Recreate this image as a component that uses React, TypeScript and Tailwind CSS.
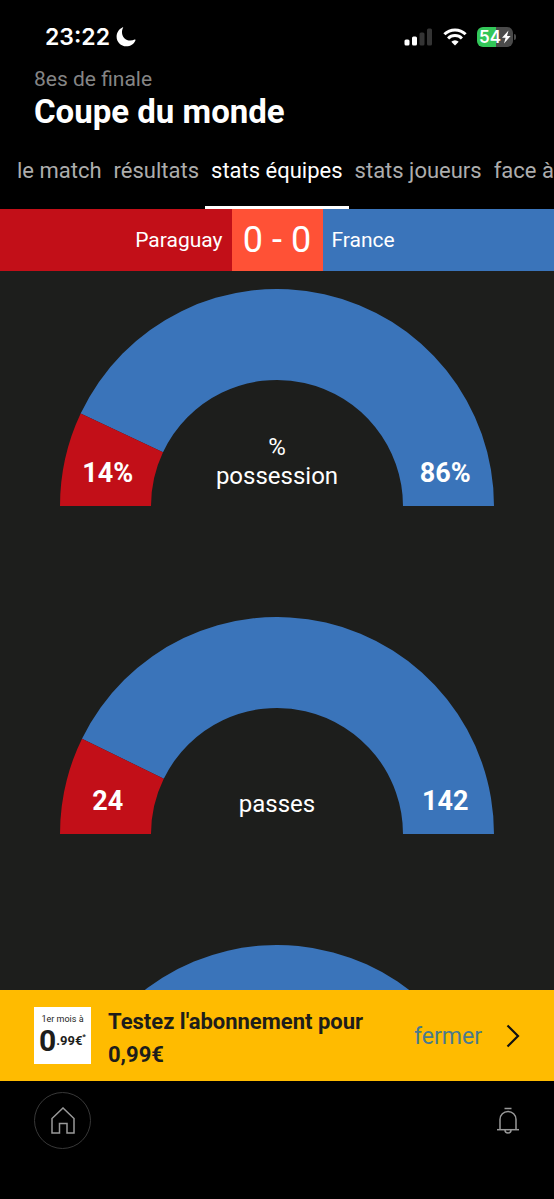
import React from "react";

type Stat = {
  id: string;
  label?: string[];
  home: number;
  away: number;
  unit?: string;
};

const TABS = ["le match", "résultats", "stats équipes", "stats joueurs", "face à"];
const ACTIVE_TAB = "stats équipes";

const STATS: Stat[] = [
  { id: "possession", label: ["%", "possession"], home: 14, away: 86, unit: "%" },
  { id: "passes", label: ["passes"], home: 24, away: 142 },
  { id: "next", home: 1, away: 5 },
];

const OUTER = 217;
const INNER = 126;

function arcPath(from: number, to: number) {
  const point = (radius: number, share: number) => {
    const angle = Math.PI * (1 - share);
    return `${OUTER + radius * Math.cos(angle)} ${OUTER - radius * Math.sin(angle)}`;
  };
  return [
    `M ${point(OUTER, from)}`,
    `A ${OUTER} ${OUTER} 0 0 1 ${point(OUTER, to)}`,
    `L ${point(INNER, to)}`,
    `A ${INNER} ${INNER} 0 0 0 ${point(INNER, from)}`,
    "Z",
  ].join(" ");
}

function Gauge({ stat }: { stat: Stat }) {
  const share = stat.home / (stat.home + stat.away);
  return (
    <section className="grid">
      <svg viewBox="0 0 434 217" className="col-start-1 row-start-1 w-full" aria-hidden="true">
        <path d={arcPath(share, 1)} fill="#3a74ba" />
        <path d={arcPath(0, share)} fill="#c20f18" />
      </svg>
      {stat.label && (
        <div className="col-start-1 row-start-1 grid grid-cols-[22%_1fr_22%] items-end pb-[15px] text-center text-white">
          <span className="text-[27px] leading-9 font-bold">
            {stat.home}
            {stat.unit}
          </span>
          <h2 className="text-2xl leading-[29px]">
            {stat.label.map((line) => (
              <span key={line} className="block">
                {line}
              </span>
            ))}
          </h2>
          <span className="pr-0.5 text-[27px] leading-9 font-bold">
            {stat.away}
            {stat.unit}
          </span>
        </div>
      )}
    </section>
  );
}

function StatusBar() {
  return (
    <div className="flex h-16 items-center justify-between pt-2.5 pr-[38px] pl-[45px] text-white">
      <div className="flex items-center gap-1.5">
        <span className="font-['Inter',sans-serif] text-[23px] leading-7 font-semibold">23:22</span>
        <svg width="20" height="20" viewBox="0 0 20 20" aria-hidden="true">
          <path
            d="M7.1.7C6.300 2.200 6 3.600 6 5.200C6 10 9.700 13.500 14.300 13.500C16 13.500 17.300 13.200 18.600 12.600C19.200 12.300 19.700 12.800 19.400 13.400C17.900 16.900 14.400 19.300 10.300 19.300C4.900 19.300.6 15 .6 9.700C.6 5.700 2.900 2.100 6.400.5C7 .2 7.400.3 7.100.7Z"
            fill="#fff"
          />
        </svg>
      </div>
      <div className="flex items-center gap-2.5">
        <svg width="29" height="18" viewBox="0 0 29 18" aria-hidden="true">
          <rect x="0.500" y="11.500" width="5" height="6" rx="1.500" fill="#fff" />
          <rect x="8" y="8.500" width="5" height="9" rx="1.500" fill="#fff" />
          <rect x="15.500" y="4.500" width="5" height="13" rx="1.500" fill="#343434" />
          <rect x="23" y="0.500" width="5" height="17" rx="1.500" fill="#343434" />
        </svg>
        <svg width="24" height="18" viewBox="0 0 24 18" aria-hidden="true">
          <g fill="none" stroke="#fff" strokeWidth="3">
            <path d="M1.400 6.300A15 15 0 0 1 22.600 6.300" />
            <path d="M5.100 10.500A9.700 9.700 0 0 1 18.900 10.500" />
          </g>
          <path d="M12 17.600L8.300 13.800A5.300 5.300 0 0 1 15.700 13.800Z" fill="#fff" />
        </svg>
        <div className="flex items-center gap-px">
          <div className="flex h-5 w-9 items-center justify-center rounded-md bg-[linear-gradient(90deg,#33c759_54%,#4a4a4a_54%)]">
            <span className="font-['Inter',sans-serif] text-[17px] leading-5 font-semibold">54</span>
            <svg width="10" height="14" viewBox="0 0 10 14" aria-hidden="true">
              <path d="M7.500.5L1 7.800H4.600L3 13.500L9.600 6H6Z" fill="#fff" />
            </svg>
          </div>
          <span className="h-1.5 w-0.5 rounded-r-full bg-[#4a4a4a]" />
        </div>
      </div>
    </div>
  );
}

export default function App() {
  return (
    <div className="flex h-dvh flex-col bg-black font-['Roboto',sans-serif]">
      <header className="shrink-0 bg-black">
        <StatusBar />
        <div className="px-[34px] pt-px">
          <p className="text-[21px] leading-7 text-[#858585]">8es de finale</p>
          <h1 className="text-[33px] leading-[38px] font-bold text-white">Coupe du monde</h1>
        </div>
        <nav className="flex h-[78px] items-stretch overflow-hidden pl-[11px]">
          {TABS.map((tab) => (
            <a
              key={tab}
              href="#"
              aria-current={tab === ACTIVE_TAB ? "page" : undefined}
              className={
                tab === ACTIVE_TAB
                  ? "flex shrink-0 items-center border-b-3 border-white px-1.5 pt-1 text-[22px] text-white"
                  : "flex shrink-0 items-center border-b-3 border-transparent px-1.5 pt-1 text-[22px] text-[#adadad]"
              }
            >
              {tab}
            </a>
          ))}
        </nav>
        <div className="grid h-[62px] grid-cols-[1fr_auto_1fr] text-[21px] text-white">
          <div className="flex items-center justify-end bg-[#c20f18] pt-0.5 pr-[9px]">Paraguay</div>
          <div className="flex w-[91px] items-center justify-center bg-[#ff5136] text-4xl">0 - 0</div>
          <div className="flex items-center bg-[#3a74ba] pt-0.5 pl-[9px]">France</div>
        </div>
      </header>

      <main className="min-h-0 flex-1 overflow-y-auto bg-[#1d1e1c] px-[60px] pt-[18px] [scrollbar-width:none]">
        <div className="flex flex-col gap-[111px]">
          {STATS.map((stat) => (
            <Gauge key={stat.id} stat={stat} />
          ))}
        </div>
      </main>

      <aside className="flex h-[91px] shrink-0 items-center bg-[#ffbb00] px-[34px]">
        <div className="flex h-[57px] w-[57px] shrink-0 flex-col items-center bg-white pt-1.5 text-[#1d1d1b]">
          <span className="text-[9px] leading-3">1er mois à</span>
          <span className="flex items-center font-bold">
            <span className="text-3xl leading-8">0</span>
            <span className="text-[13px] leading-4">.99€</span>
            <span className="self-start pt-1.5 text-[8px] leading-3">*</span>
          </span>
        </div>
        <p className="ml-[17px] w-[270px] pt-1 text-[22px] leading-[33px] font-bold text-[#1d1d1b]">
          Testez l'abonnement pour 0,99€
        </p>
        <button type="button" className="ml-auto pt-1 text-[23px] text-[#4a7a8c]">
          fermer
        </button>
        <a href="#" aria-label="S'abonner" className="ml-6">
          <svg width="14" height="24" viewBox="0 0 14 24" aria-hidden="true">
            <path d="M1.500 1.500L12 12L1.500 22.500" fill="none" stroke="#111" strokeWidth="2.200" />
          </svg>
        </a>
      </aside>

      <footer className="flex h-[118px] shrink-0 items-start justify-between bg-black px-[34px] pt-[11px]">
        <a
          href="#"
          aria-label="Accueil"
          className="flex h-[57px] w-[57px] items-center justify-center rounded-full border border-[#383838]"
        >
          <svg width="24" height="27" viewBox="0 0 24 27" aria-hidden="true">
            <path
              d="M1 26V11.500L12 1L23 11.500V26H16V16.500H8.500V26Z"
              fill="none"
              stroke="#999"
              strokeWidth="1.500"
            />
          </svg>
        </a>
        <button type="button" aria-label="Notifications" className="flex h-[57px] items-center">
          <svg width="24" height="27" viewBox="0 0 24 27" aria-hidden="true">
            <g fill="none" stroke="#999" strokeWidth="1.500">
              <path d="M8.500 1.500H15.500" />
              <path d="M4 22.500V12.500A8 8 0 0 1 20 12.500V22.500" />
              <path d="M1 22.700H23" />
              <path d="M9 23A3 3 0 0 0 15 23" />
            </g>
          </svg>
        </button>
      </footer>
    </div>
  );
}
